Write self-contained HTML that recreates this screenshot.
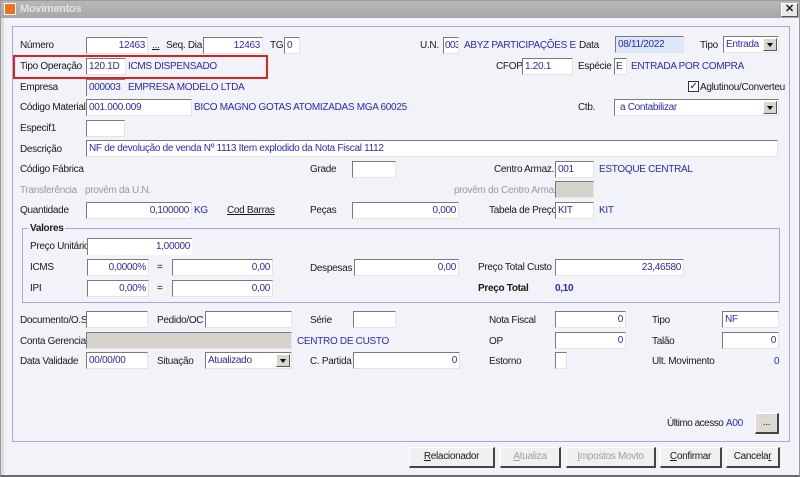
<!DOCTYPE html>
<html><head><meta charset="utf-8"><style>
*{box-sizing:border-box;margin:0;padding:0}
body{width:800px;height:477px;overflow:hidden;background:#f2f3f9;font-family:"Liberation Sans",sans-serif;font-size:10px;letter-spacing:-0.3px;color:#1a1a1a;position:relative}
.a{position:absolute;white-space:nowrap;line-height:16px;margin-top:1px}
.g{color:#9a9a9a}
.b{color:#2a2ab8}
.i{position:absolute;height:17px;background:#fff;border-top:1px solid #7a7a7a;border-left:1px solid #7a7a7a;border-bottom:1px solid #e4e4e4;border-right:1px solid #e4e4e4;color:#2a2ab8;line-height:15px;padding:0 2px;white-space:nowrap;overflow:hidden}
.r{text-align:right}
.gr{background:#d6d3ce}
.dd{position:absolute;right:1px;top:1px;width:14px;height:13px;background:#d8d5cf;border:1px solid #fff;border-right-color:#555;border-bottom-color:#555}
.dd:after{content:"";position:absolute;left:3px;top:4px;border-left:3.5px solid transparent;border-right:3.5px solid transparent;border-top:4px solid #000}
.btn{position:absolute;height:21px;background:#f0f0f0;border:1px solid #fff;border-right:2px solid #444;border-bottom:2px solid #444;text-align:center;line-height:18px}
</style></head><body>
<div style="position:absolute;left:0;top:0;width:800px;height:477px;border:1px solid #9a9a9a;border-bottom:2px solid #6a6a6a"></div>
<div style="position:absolute;left:1px;top:1px;width:798px;height:17px;background:linear-gradient(#b8b8b8,#a6a6a6)"></div>
<div style="position:absolute;left:4px;top:3px;width:12px;height:12px;background:#f07020;border:1px solid #fff"></div>
<div class="a" style="left:20px;top:0px;font-weight:bold;color:#e2e2e2;font-size:11px">Movimentos</div>
<div style="position:absolute;left:781px;top:3px;width:17px;height:14px;background:#e8e8e8;border:1px solid #fff;border-right-color:#555;border-bottom-color:#555;text-align:center;line-height:11px;font-weight:bold;font-size:11px">✕</div>
<div style="position:absolute;left:1px;top:18px;width:3px;height:457px;background:#dcdcdc"></div>
<div style="position:absolute;left:12px;top:26px;width:778px;height:416px;border:1px solid #a8a8dc"></div>

<div class="a" style="left:20px;top:37px">Número</div>
<div class="i r" style="left:86px;top:37px;width:62px">12463</div>
<div class="a" style="left:152px;top:37px;text-decoration:underline">...</div>
<div class="a" style="left:166px;top:37px">Seq. Dia</div>
<div class="i r" style="left:203px;top:37px;width:60px">12463</div>
<div class="a" style="left:270px;top:37px">TG</div>
<div class="i" style="left:284px;top:37px;width:16px">0</div>
<div class="a" style="left:420px;top:37px">U.N.</div>
<div class="i" style="left:443px;top:37px;width:16px;padding:0 0 0 1px;letter-spacing:-0.6px">003</div>
<div class="a b" style="left:464px;top:37px">ABYZ PARTICIPAÇÕES E</div>
<div class="a" style="left:579px;top:37px">Data</div>
<div class="i" style="left:615px;top:36px;width:69px;background:#dde8fa">08/11/2022</div>
<div class="a" style="left:700px;top:37px">Tipo</div>
<div class="i" style="left:723px;top:36px;width:56px">Entrada<div class="dd"></div></div>

<div style="position:absolute;left:13px;top:55px;width:255px;height:24px;border:2px solid #e02020"></div>
<div class="a" style="left:20px;top:58px">Tipo Operação</div>
<div class="i" style="left:86px;top:58px;width:40px">120.1D</div>
<div class="a b" style="left:128px;top:58px">ICMS DISPENSADO</div>
<div class="a" style="left:496px;top:58px">CFOP</div>
<div class="i" style="left:522px;top:58px;width:51px">1.20.1</div>
<div class="a" style="left:578px;top:58px">Espécie</div>
<div class="i" style="left:614px;top:58px;width:13px;padding:0 1px">E</div>
<div class="a b" style="left:631px;top:58px">ENTRADA POR COMPRA</div>

<div class="a" style="left:20px;top:79px">Empresa</div>
<div class="i" style="left:86px;top:79px;width:39px;border-right:0;border-bottom:0;background:transparent">000003</div>
<div class="a b" style="left:128px;top:79px">EMPRESA MODELO LTDA</div>
<div style="position:absolute;left:688px;top:81px;width:11px;height:11px;background:#fff;border:1px solid #333;font-size:10px;line-height:9px;text-align:center">✓</div>
<div class="a" style="left:700px;top:79px">Aglutinou/Converteu</div>

<div class="a" style="left:20px;top:99px">Código Material</div>
<div class="i" style="left:86px;top:99px;width:106px">001.000.009</div>
<div class="a b" style="left:194px;top:99px">BICO MAGNO GOTAS ATOMIZADAS MGA 60025</div>
<div class="a" style="left:578px;top:99px">Ctb.</div>
<div class="i" style="left:614px;top:99px;width:165px;padding-left:5px">a Contabilizar<div class="dd"></div></div>

<div class="a" style="left:20px;top:120px">Especif1</div>
<div class="i" style="left:86px;top:120px;width:39px"></div>

<div class="a" style="left:20px;top:141px">Descrição</div>
<div class="i" style="left:86px;top:140px;width:692px">NF de devolução de venda Nº 1113 Item explodido da Nota Fiscal 1112</div>

<div class="a" style="left:20px;top:161px">Código Fábrica</div>
<div class="a" style="left:310px;top:161px">Grade</div>
<div class="i" style="left:352px;top:161px;width:44px"></div>
<div class="a" style="left:494px;top:161px">Centro Armaz.</div>
<div class="i" style="left:555px;top:161px;width:39px">001</div>
<div class="a b" style="left:599px;top:161px">ESTOQUE CENTRAL</div>

<div class="a g" style="left:20px;top:182px">Transferência</div>
<div class="a g" style="left:85px;top:182px">provêm da U.N.</div>
<div class="a g" style="left:454px;top:182px">provêm do Centro Armaz</div>
<div class="i gr" style="left:555px;top:181px;width:39px"></div>

<div class="a" style="left:20px;top:202px">Quantidade</div>
<div class="i r" style="left:86px;top:202px;width:106px">0,100000</div>
<div class="a b" style="left:194px;top:202px">KG</div>
<div class="a" style="left:227px;top:202px;text-decoration:underline">Cod Barras</div>
<div class="a" style="left:310px;top:202px">Peças</div>
<div class="i r" style="left:352px;top:202px;width:107px">0,000</div>
<div class="a" style="left:489px;top:202px">Tabela de Preço</div>
<div class="i" style="left:555px;top:202px;width:39px">KIT</div>
<div class="a b" style="left:599px;top:202px">KIT</div>

<div style="position:absolute;left:22px;top:228px;width:758px;height:75px;border:1px solid #a8a8dc"></div>
<div class="a" style="left:28px;top:220px;font-weight:bold;background:#f2f3f9;padding:0 2px">Valores</div>
<div class="a" style="left:30px;top:238px">Preço Unitário</div>
<div class="i r" style="left:87px;top:238px;width:105px;border-bottom:0;border-right:0">1,00000</div>
<div class="a" style="left:30px;top:259px">ICMS</div>
<div class="i r" style="left:87px;top:259px;width:62px">0,0000%</div>
<div class="a" style="left:157px;top:259px">=</div>
<div class="i r" style="left:172px;top:259px;width:101px">0,00</div>
<div class="a" style="left:310px;top:260px">Despesas</div>
<div class="i r" style="left:354px;top:259px;width:105px">0,00</div>
<div class="a" style="left:478px;top:259px">Preço Total Custo</div>
<div class="i r" style="left:555px;top:259px;width:129px">23,46580</div>
<div class="a" style="left:30px;top:280px">IPI</div>
<div class="i r" style="left:87px;top:280px;width:62px">0,00%</div>
<div class="a" style="left:157px;top:280px">=</div>
<div class="i r" style="left:172px;top:280px;width:101px">0,00</div>
<div class="a" style="left:478px;top:280px;font-weight:bold">Preço Total</div>
<div class="a b" style="left:555px;top:280px;font-weight:bold">0,10</div>

<div class="a" style="left:20px;top:312px">Documento/O.S</div>
<div class="i" style="left:86px;top:311px;width:62px"></div>
<div class="a" style="left:157px;top:312px">Pedido/OC</div>
<div class="i" style="left:205px;top:311px;width:87px"></div>
<div class="a" style="left:310px;top:312px">Série</div>
<div class="i" style="left:353px;top:311px;width:43px"></div>
<div class="a" style="left:489px;top:312px">Nota Fiscal</div>
<div class="i r" style="left:555px;top:311px;width:71px">0</div>
<div class="a" style="left:652px;top:312px">Tipo</div>
<div class="i" style="left:722px;top:311px;width:57px">NF</div>

<div class="a" style="left:20px;top:333px">Conta Gerencial</div>
<div class="i gr" style="left:86px;top:332px;width:206px"></div>
<div class="a b" style="left:297px;top:333px">CENTRO DE CUSTO</div>
<div class="a" style="left:489px;top:333px">OP</div>
<div class="i r" style="left:555px;top:332px;width:71px">0</div>
<div class="a" style="left:652px;top:333px">Talão</div>
<div class="i r" style="left:722px;top:332px;width:57px">0</div>

<div class="a" style="left:20px;top:353px">Data Validade</div>
<div class="i" style="left:86px;top:352px;width:62px">00/00/00</div>
<div class="a" style="left:157px;top:353px">Situação</div>
<div class="i" style="left:205px;top:352px;width:87px">Atualizado<div class="dd"></div></div>
<div class="a" style="left:310px;top:353px">C. Partida</div>
<div class="i r" style="left:353px;top:352px;width:107px">0</div>
<div class="a" style="left:489px;top:353px">Estorno</div>
<div class="i" style="left:555px;top:352px;width:12px"></div>
<div class="a" style="left:652px;top:353px">Ult. Movimento</div>
<div class="a b" style="left:774px;top:353px">0</div>

<div class="a" style="left:667px;top:415px;letter-spacing:-0.5px">Último acesso</div>
<div class="a b" style="left:726px;top:415px">A00</div>
<div class="btn" style="left:755px;top:413px;width:24px;height:21px;background:#dcd9d4">...</div>

<div class="btn" style="left:409px;top:447px;width:86px"><u>R</u>elacionador</div>
<div class="btn" style="left:500px;top:447px;width:61px;color:#a0a0a0"><u>A</u>tualiza</div>
<div class="btn" style="left:566px;top:447px;width:90px;color:#a0a0a0"><u>I</u>mpostos Movto</div>
<div class="btn" style="left:660px;top:447px;width:62px"><u>C</u>onfirmar</div>
<div class="btn" style="left:726px;top:447px;width:54px">Cancela<u>r</u></div>
</body></html>
